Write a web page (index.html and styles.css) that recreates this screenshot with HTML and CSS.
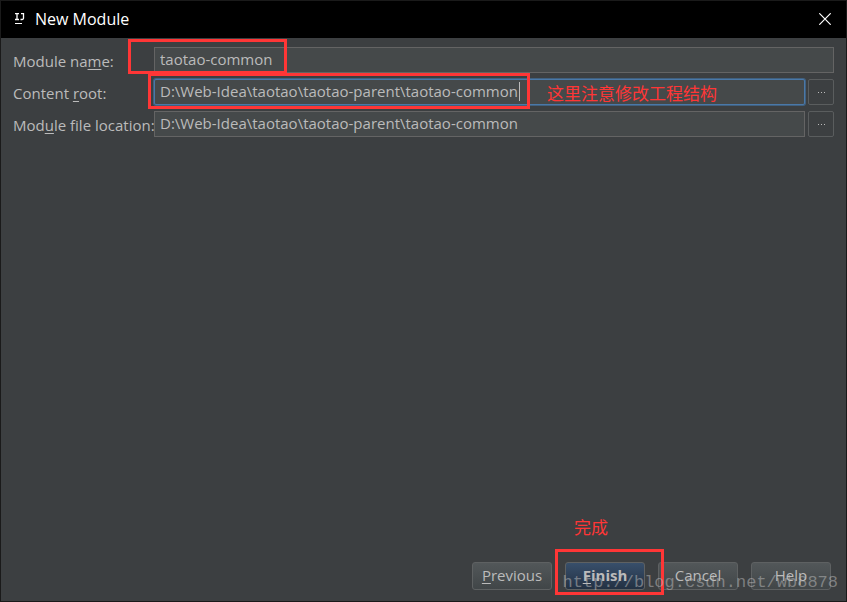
FILE: index.html
```html
<!DOCTYPE html>
<html lang="en">
<head>
  <meta charset="UTF-8" />
  <meta name="viewport" content="width=device-width, initial-scale=1" />
  <title>New Module</title>
  <link rel="stylesheet" href="styles.css">
</head>
<body>

  <div class="dialog">
    <header class="titlebar">
      <svg class="logo" width="10" height="12" viewBox="0 0 10 12" fill="none" stroke="#fff">
        <path d="M0 0.5H4M2 0.5V6.5M0 6.5H4" stroke-width="1.3" />
        <path d="M6 0.5H9M8.5 0V5Q8.5 6.5 7 6.5H5.5" stroke-width="1.3" />
        <path d="M0 10.5H7" />
      </svg>
      <h1>New Module</h1>
      <button type="button" class="close" aria-label="Close">
        <svg width="12" height="12" viewBox="0 0 12 12" stroke="#fff" stroke-width="1.2">
          <path d="M0.3 0.3L11.7 11.7M11.7 0.3L0.3 11.7" />
        </svg>
      </button>
    </header>

    <form class="content">
      <div class="row">
        <label for="moduleName">Module na<u>m</u>e:</label>
        <div class="field">
          <input type="text" id="moduleName" value="taotao-common" spellcheck="false" />
          <span class="mark mark-name"></span>
        </div>
      </div>
      <div class="row">
        <label for="contentRoot">Content <u>r</u>oot:</label>
        <div class="field">
          <input type="text" id="contentRoot" class="focused" value="D:\Web-Idea\taotao\taotao-parent\taotao-common" spellcheck="false" />
          <span class="caret"></span>
          <span class="mark mark-root"></span>
          <span class="note note-root" lang="zh">这里注意修改工程结构</span>
        </div>
        <button type="button" class="browse" aria-label="Browse content root"><i></i><i></i><i></i></button>
      </div>
      <div class="row">
        <label for="fileLocation">Mod<u>u</u>le file location:</label>
        <div class="field">
          <input type="text" id="fileLocation" value="D:\Web-Idea\taotao\taotao-parent\taotao-common" spellcheck="false" />
        </div>
        <button type="button" class="browse" aria-label="Browse module file location"><i></i><i></i><i></i></button>
      </div>
    </form>

    <footer class="actions">
      <button type="button" class="btn"><u>P</u>revious</button>
      <div class="finish">
        <button type="button" class="btn primary"><u>F</u>inish</button>
        <span class="mark mark-finish"></span>
        <span class="note note-finish" lang="zh">完成</span>
      </div>
      <button type="button" class="btn">Cancel</button>
      <button type="button" class="btn">Help</button>
      <span class="watermark">http://blog.csdn.net/wb8878</span>
    </footer>
  </div>

</body>
</html>
```
FILE: styles.css
```css
* {
  box-sizing: border-box;
}

body {
  margin: 0;
  font-family: "Open Sans", "Noto Sans", "Noto Sans CJK SC", sans-serif;
  font-size: 15px;
  color: #bbbbbb;
}

.dialog {
  display: flex;
  flex-direction: column;
  min-height: 100vh;
  background: #3c3f41;
  border: 1px solid #1a1a1a;
}

/* Title bar */
.titlebar {
  display: flex;
  align-items: center;
  height: 37px;
  padding: 0 15px 1px 14px;
  background: #000;
  color: #fff;
}

.titlebar h1 {
  flex: 1;
  margin: 0 0 0 10px;
  font-size: 16px;
  font-weight: 400;
}

.close {
  display: flex;
  padding: 0;
  background: none;
  border: none;
}

/* Form rows */
.content {
  flex: 1;
  display: flex;
  flex-direction: column;
  gap: 6px;
  padding: 9px 12px;
}

.row {
  display: flex;
  height: 26px;
}

.row label {
  width: 141px;
  padding-top: 3px;
  line-height: 22px;
  white-space: nowrap;
}

u {
  text-decoration-thickness: 1px;
  text-underline-offset: 2px;
  text-decoration-skip-ink: none;
}

.field {
  position: relative;
  flex: 1;
}

.field input {
  display: block;
  width: 100%;
  height: 26px;
  padding: 0 5px 2px;
  background: #45494a;
  border: 1px solid #646464;
  color: #bbbbbb;
  font: inherit;
  outline: none;
}

.field input.focused {
  border-color: #4a78a8;
  border-radius: 2px;
  box-shadow: 0 0 0 1px #40607f;
}

.caret {
  position: absolute;
  left: 365px;
  top: 3px;
  width: 1px;
  height: 19px;
  background: #bbbbbb;
}

.browse {
  display: flex;
  justify-content: center;
  align-items: center;
  gap: 2px;
  width: 26px;
  margin-left: 3px;
  padding: 0;
  background: #3c3f41;
  border: 1px solid #5a5d5e;
  border-radius: 2px;
}

.browse i {
  width: 1px;
  height: 1px;
  background: #bbbbbb;
}

/* Buttons at the bottom */
.actions {
  position: relative;
  display: flex;
  justify-content: flex-end;
  gap: 13px;
  padding: 0 15px 11px;
}

.btn {
  width: 80px;
  height: 28px;
  padding: 0 0 2px;
  background: linear-gradient(#525759, #414648);
  border: 1px solid #5e6162;
  border-radius: 3px;
  color: #bbbbbb;
  font: inherit;
}

.primary {
  background: linear-gradient(#384f6b, #233143);
  font-weight: 700;
}

.finish {
  position: relative;
}

/* Red annotations */
.mark {
  position: absolute;
  z-index: 1;
  border: 3px solid #ff3636;
  pointer-events: none;
}

.mark-name {
  left: -26px;
  top: -8px;
  width: 159px;
  height: 35px;
}

.mark-root {
  left: -6px;
  top: -6px;
  width: 382px;
  height: 36px;
}

.mark-finish {
  left: -10px;
  top: -13px;
  width: 109px;
  height: 46px;
}

.note {
  position: absolute;
  color: #ff3636;
  font-family: "Noto Sans CJK SC", sans-serif;
  font-size: 17px;
  line-height: 20px;
  white-space: nowrap;
}

.note-root {
  left: 393px;
  top: 4px;
}

.note-finish {
  left: 9px;
  top: -45px;
}

.watermark {
  position: absolute;
  right: 8px;
  bottom: 7px;
  z-index: 2;
  color: rgba(190, 190, 190, 0.5);
  font-family: "Liberation Mono", monospace;
  font-size: 17px;
  line-height: 22px;
  pointer-events: none;
}
```
